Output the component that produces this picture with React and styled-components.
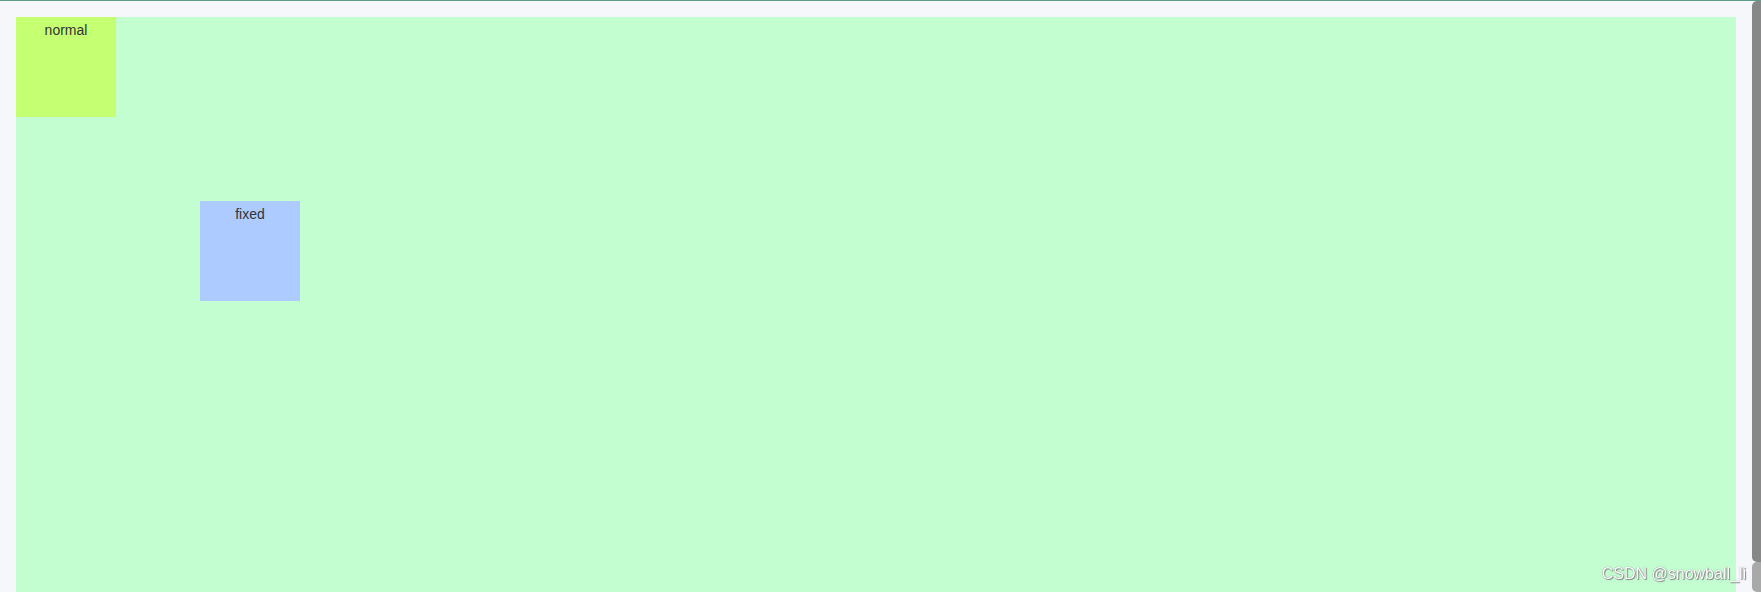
import React from "react";
import styled, { createGlobalStyle } from "styled-components";

const GlobalStyle = createGlobalStyle`
  html, body {
    margin: 0;
    padding: 0;
    height: 592px;
    overflow: hidden;
    background: #f6f7fb;
    font-family: "Liberation Sans", Arial, sans-serif;
  }
  #root {
    height: 100%;
  }
`;

const Page = styled.div`
  box-sizing: border-box;
  height: 592px;
  border-top: 1px solid #5f9b82;
  padding: 16px 25px 0 16px;
  display: flex;
`;

const Stage = styled.div`
  flex: 1;
  background: #c2fed0;
  display: flex;
  flex-direction: column;
  align-items: flex-start;
`;

const Square = styled.div`
  width: 100px;
  height: 100px;
  padding-top: 1px;
  background: ${(p) => p.$bg};
  color: #333;
  font-size: 14px;
  line-height: 24px;
  text-align: center;
  box-sizing: border-box;
`;

const FixedSquare = styled(Square)`
  position: fixed;
  left: 200px;
  top: 201px;
`;

const Watermark = styled.div`
  position: fixed;
  right: 15px;
  bottom: 9px;
  font-size: 16px;
  line-height: 18px;
  color: #ffffff;
  text-shadow: 0 0 1px #666, 1px 1px 1px #888;
  white-space: nowrap;
`;

const ScrollTrack = styled.div`
  position: fixed;
  top: 1px;
  right: 0;
  bottom: 0;
  width: 9px;
  display: flex;
  flex-direction: column;
`;

const Thumb = styled.div`
  height: ${(p) => p.$h}px;
  flex: ${(p) => (p.$h ? "none" : "1")};
  background: ${(p) => p.$bg};
  border-radius: 5px 0 0 5px;
`;

export default function App() {
  return (
    <>
      <GlobalStyle />
      <Page>
        <Stage>
          <Square $bg="#c5ff72">normal</Square>
        </Stage>
      </Page>
      <FixedSquare $bg="#adcbfe">fixed</FixedSquare>
      <Watermark>CSDN @snowball_li</Watermark>
      <ScrollTrack>
        <Thumb $h={561} $bg="#878787" />
        <Thumb $bg="#a9a9a9" />
      </ScrollTrack>
    </>
  );
}
